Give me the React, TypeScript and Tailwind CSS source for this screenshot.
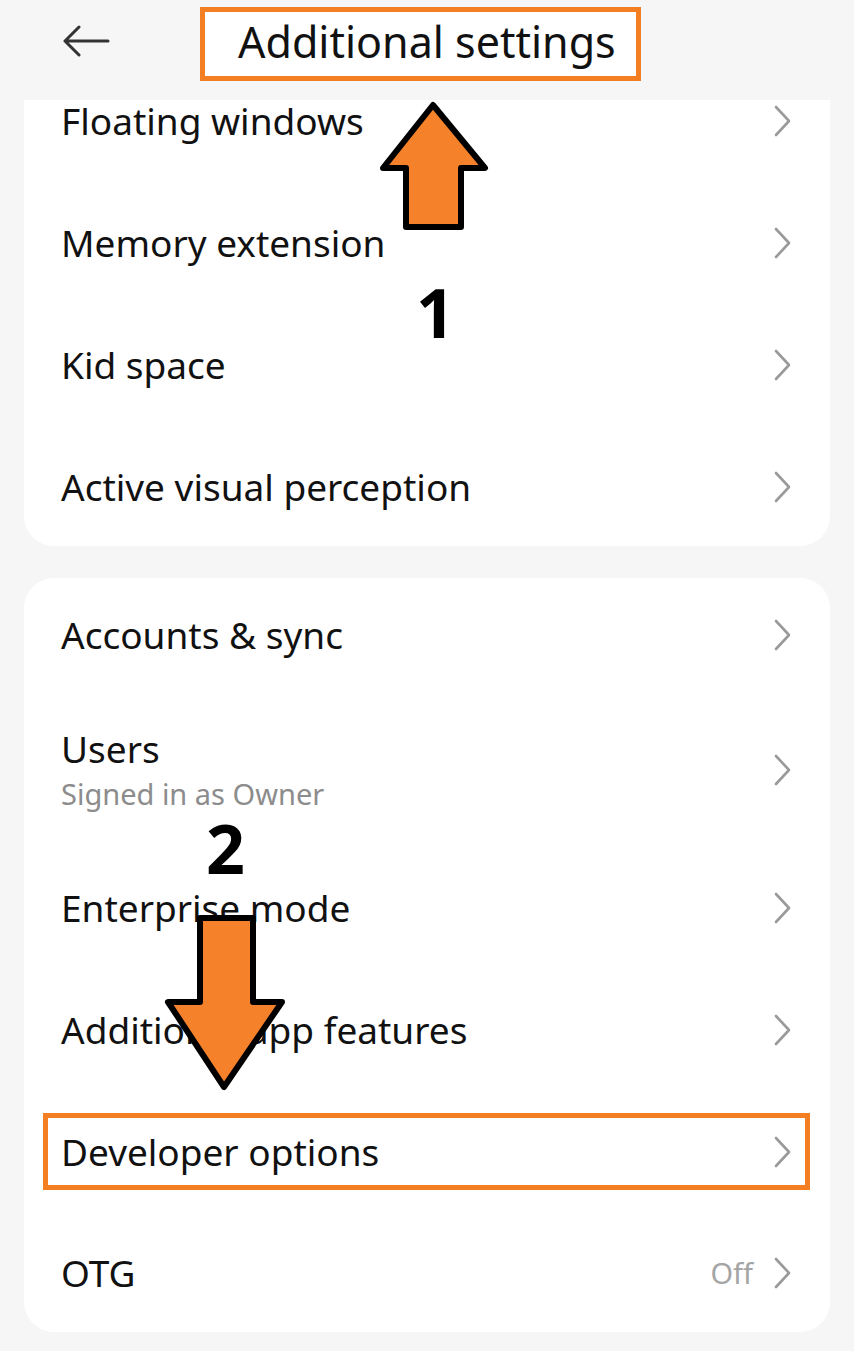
import React from "react";

const Chevron = () => (
  <svg width="20" height="34" viewBox="0 0 20 34" className="shrink-0">
    <path d="M3 3 L16 17 L3 31" fill="none" stroke="#9a9a9a" strokeWidth="2.6" strokeLinecap="round" strokeLinejoin="round" />
  </svg>
);

const Row = ({ title, sub, value, h }: { title: string; sub?: string; value?: string; h: string }) => (
  <div className={`flex items-center justify-between pl-[37px] pr-[37px] ${h}`}>
    <div className="flex flex-col">
      <span className="text-[37px] leading-[44px] text-[#111]">{title}</span>
      {sub && <span className="text-[29px] leading-[36px] text-[#8c8c8c] mt-[5px]">{sub}</span>}
    </div>
    <div className="flex items-center gap-[20px]">
      {value && <span className="text-[29px] text-[#a5a5a5]">{value}</span>}
      <Chevron />
    </div>
  </div>
);

export default function App() {
  return (
    <div className="relative w-[854px] h-[1351px] bg-[#f6f6f6] overflow-hidden" style={{ fontFamily: '"Noto Sans", "Open Sans", sans-serif' }}>
      {/* Header */}
      <div className="flex items-start h-[100px]">
        <div className="ml-[62px] mt-[25px] w-[48px] h-[32px]">
          <svg width="48" height="32" viewBox="0 0 48 32">
            <path d="M46 16 H3 M17 2 L3 16 L17 30" fill="none" stroke="#333" strokeWidth="3" strokeLinecap="round" strokeLinejoin="round" />
          </svg>
        </div>
        <div className="ml-[90px] mt-[7px] w-[441px] h-[74px] border-[5px] border-[#f47f22] bg-white flex items-center pl-[33px] pb-[6px]">
          <span className="text-[43px] leading-none text-[#111]">Additional settings</span>
        </div>
      </div>

      {/* Card 1 */}
      <div className="mx-[24px] w-[806px] h-[446px] bg-white rounded-b-[30px]">
        <Row title="Floating windows" h="h-[82px] pb-[40px]" />
        <Row title="Memory extension" h="h-[122px]" />
        <Row title="Kid space" h="h-[122px]" />
        <Row title="Active visual perception" h="h-[122px]" />
      </div>

      {/* Card 2 */}
      <div className="mx-[24px] mt-[32px] w-[806px] bg-white rounded-[30px]">
        <Row title="Accounts & sync" h="h-[114px]" />
        <Row title="Users" sub="Signed in as Owner" h="h-[155px]" />
        <Row title="Enterprise mode" h="h-[122px]" />
        <Row title="Additional app features" h="h-[122px]" />
        <div className="relative">
          <Row title="Developer options" h="h-[122px]" />
          <div className="absolute left-[19px] top-[22px] w-[767px] h-[77px] border-[5px] border-[#f47f22]" />
        </div>
        <Row title="OTG" value="Off" h="h-[119px]" />
      </div>

      {/* Annotations */}
      <svg className="absolute left-[375px] top-[98px]" width="120" height="136" viewBox="0 0 120 136">
        <path d="M58 7 L110 70 L86 70 L86 129 L31 129 L31 70 L8 70 Z" fill="#f5822a" stroke="#000" strokeWidth="6" strokeLinejoin="round" />
      </svg>
      <div className="absolute left-[416px] top-[278px] text-[68px] font-bold leading-none text-black" style={{ fontFamily: '"Open Sans", "Noto Sans", sans-serif' }}>1</div>
      <div className="absolute left-[206px] top-[814px] text-[68px] font-bold leading-none text-black" style={{ fontFamily: '"Open Sans", "Noto Sans", sans-serif' }}>2</div>
      <svg className="absolute left-[160px] top-[912px]" width="130" height="182" viewBox="0 0 130 182">
        <path d="M40 6 L93 6 L93 90 L122 90 L64 175 L8 90 L40 90 Z" fill="#f5822a" stroke="#000" strokeWidth="6" strokeLinejoin="round" />
      </svg>
    </div>
  );
}
